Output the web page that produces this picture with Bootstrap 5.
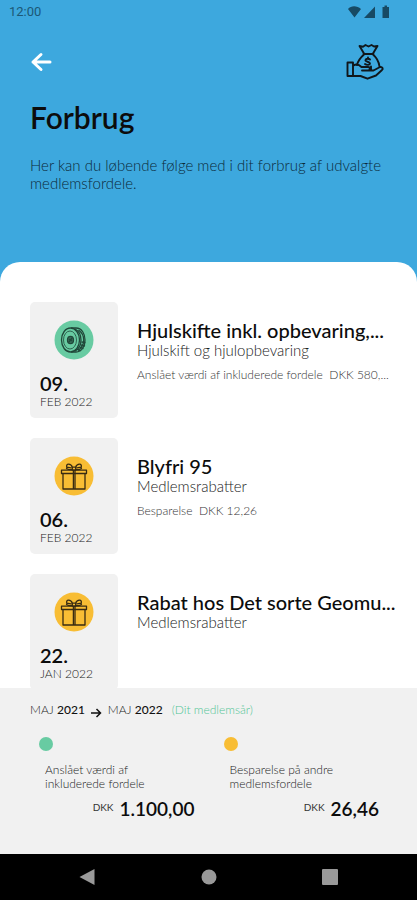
<!DOCTYPE html>
<html lang="da">
<head>
<meta charset="utf-8">
<meta name="viewport" content="width=device-width, initial-scale=1">
<title>Forbrug</title>
<link rel="stylesheet" href="https://cdn.jsdelivr.net/npm/bootstrap@5.3.0/dist/css/bootstrap.min.css">
<style>
body { font-family: Lato, "Open Sans", sans-serif; background: #3da8de; color: #0c0c0c; }
.status { height: 24px; padding: 0 27px 0 9px; font: 13px/24px Roboto, sans-serif; color: #1c5876; }
.status svg { fill: #174a64; }
.top { height: 238px; padding: 16px 32px 0 30px; }
.back { line-height: 0; }
.page-title { font-size: 30px; line-height: 36px; font-weight: 600; margin: 15px 0 21px; }
.intro { font-size: 15px; line-height: 18px; font-weight: 300; color: #0c2a3a; }
.sheet { border-radius: 20px 20px 0 0; padding: 40px 27px 0 30px; }
.entries { gap: 20px; }
.entry { gap: 19px; }
.date-tile { width: 88px; height: 116px; padding: 18px 10px 0; border-radius: 5px; background: #f1f1f1; }
.date-tile svg { display: block; margin: 0 auto 11px 14px; }
.day { font-size: 20px; line-height: 24px; font-weight: 600; }
.month { font-size: 12px; line-height: 14px; font-weight: 300; color: #222; }
.entry-text { padding-top: 17px; }
.entry-title { font-size: 20px; line-height: 22px; font-weight: 500; }
.entry-kind { font-size: 15px; line-height: 18px; font-weight: 300; color: #222; }
.entry-value { font-size: 12px; line-height: 16px; margin-top: 8px; font-weight: 300; color: #333; }
.summary { height: 166px; padding: 14px 30px 0; background: #f1f1f1; }
.period { font-size: 12px; line-height: 16px; font-weight: 300; color: #222; }
.period strong { font-weight: 500; color: #111; }
.period svg { margin: 6px 6px 0 5px; }
.member-year { margin-left: 9px; color: #52c596; }
.totals { margin-top: 19px; }
.dot { width: 14px; height: 14px; margin-left: 9px; }
.dot-green { background: #68cba2; }
.dot-yellow { background: #f8bd34; }
.total-label { font-size: 12px; line-height: 14px; margin: 12px 0 0 15px; font-weight: 300; color: #222; }
.total { margin-top: 6px; line-height: 24px; gap: 6px; }
.total-first { padding-right: 14px; }
.total-second { padding-left: 6px; }
.currency { font-size: 10px; line-height: 20px; color: #333; }
.amount { font-size: 19px; font-weight: 600; }
.sysbar { height: 46px; padding: 0 78px; background: #000; }
.sysbar svg { fill: #999; display: block; }
</style>
<script src="https://cdn.jsdelivr.net/npm/bootstrap@5.3.0/dist/js/bootstrap.bundle.min.js"></script>
</head>
<body>
<svg class="d-none" aria-hidden="true">
  <symbol id="gift" viewBox="0 0 40 40">
    <circle cx="20" cy="20" r="19.5" fill="#f8bd34"/>
    <g fill="none" stroke="#382b12" stroke-width="1.3" stroke-linejoin="round">
      <path d="M7.500 14.200h25v3.300h-25zM9 17.500v15.500h22V17.500M19.400 14.200V33M21 14.200V33"/>
      <path d="M18.500 13.500c-3 .2-6-.2-6-1.200 0-1 2-1.400 5-.3M18.500 11.500c-.7-2-2-3.300-4-3.300-1.500 0-2.500 1.200-1.500 3.300M21.500 13.500c3 .2 6-.2 6-1.200 0-1-2-1.400-5-.3M21.500 11.500c.7-2 2-3.300 4-3.300 1.500 0 2.500 1.200 1.500 3.300M18.300 11.200h3.400v3h-3.400z"/>
    </g>
  </symbol>
</svg>
<div class="d-flex flex-column vh-100 overflow-hidden">
  <div class="status d-flex justify-content-between align-items-center flex-shrink-0">
    <span>12:00</span>
    <svg width="43" height="14" viewBox="0 0 43 14" aria-hidden="true"><path d="M1 4C4 .2 10 .2 14 4L7.500 12.500zM17 13L28 1.500V13zM35.500 2h2V.5h2.500V2H42v11h-6.500z"/></svg>
  </div>
  <header class="top flex-shrink-0">
    <div class="d-flex justify-content-between align-items-center">
      <button type="button" class="back btn p-0 border-0" aria-label="Tilbage">
        <svg width="22" height="20" viewBox="0 0 22 20" fill="none" stroke="#fff" stroke-width="3" stroke-linecap="round" stroke-linejoin="round" aria-hidden="true"><path d="M20 10H3M11 2.500L3 10l8 7.500"/></svg>
      </button>
      <svg width="40" height="44" viewBox="0 0 40 44" fill="none" stroke="#10171b" stroke-width="1.900" stroke-linejoin="round" stroke-linecap="round" aria-hidden="true">
        <path d="M19 13.500L14.500 6l3.500.7L20.500 5l3 1.500L26.500 5l2.500 1.500 3.500-.5L28 13.500M18.500 14h10M19 14.500c-4 3.500-6 6.500-7 10.500M28 14.500c4 3.500 6 8 6.500 12"/>
        <path d="M2.500 22.500h5.500v13.500H2.500zM8.500 25.500c3-2 6-.5 8 1.500h6.500c2.500 0 2.500 3.500 0 3.500h-6M24.500 30.500h4l6.500-3.500c2.500-.5 3.500 2 2 3L31 35.500l-8.500 3.200-7-2.700H8.500M26 30.500v-4"/>
        <path d="M25 19.500c-1-1-4-1-4.500.5-.5 2 4.500 1.500 4.500 3.500 0 1.500-3 2-5 .500M23 17.500v1.200"/>
      </svg>
    </div>
    <h1 class="page-title">Forbrug</h1>
    <p class="intro mb-0">Her kan du løbende følge med i dit forbrug af udvalgte medlemsfordele.</p>
  </header>
  <main class="sheet bg-white flex-grow-1 overflow-hidden">
    <div class="entries d-flex flex-column">
      <article class="entry d-flex">
        <div class="date-tile flex-shrink-0">
          <svg width="40" height="40" viewBox="0 0 40 40" aria-hidden="true">
            <circle cx="20" cy="20" r="19.500" fill="#68cba2"/>
            <g fill="none" stroke="#20483a" stroke-width="1.300">
              <ellipse cx="16.500" cy="20" rx="9" ry="12"/><ellipse cx="16" cy="20" rx="6.500" ry="9" stroke-width=".8"/>
              <path d="M17 8h5c12 0 12 24 0 24h-5"/>
              <path d="M21 9c8 4 8 18 0 22M24.500 10c7 5 7 15 0 20" stroke-width="1.300"/>
              <path d="M27 25l4 1M26 27.500l3.500 1M24 30l3 .5M27.500 22l4 .5" stroke-width="1.500"/>
              <ellipse cx="16.500" cy="20" rx="3" ry="3.700" fill="#376e59"/><path d="M15 19l3 2M18 18l-3 4"/>
            </g>
          </svg>
          <div class="day">09.</div>
          <div class="month">FEB 2022</div>
        </div>
        <div class="entry-text flex-grow-1">
          <h2 class="entry-title text-nowrap mb-0">Hjulskifte inkl. opbevaring,...</h2>
          <div class="entry-kind">Hjulskift og hjulopbevaring</div>
          <div class="entry-value text-nowrap">Anslået værdi af inkluderede fordele&nbsp; DKK 580,...</div>
        </div>
      </article>
      <article class="entry d-flex">
        <div class="date-tile flex-shrink-0">
          <svg width="40" height="40" aria-hidden="true"><use href="#gift"/></svg>
          <div class="day">06.</div>
          <div class="month">FEB 2022</div>
        </div>
        <div class="entry-text flex-grow-1">
          <h2 class="entry-title text-nowrap mb-0">Blyfri 95</h2>
          <div class="entry-kind">Medlemsrabatter</div>
          <div class="entry-value text-nowrap">Besparelse&nbsp; DKK 12,26</div>
        </div>
      </article>
      <article class="entry d-flex">
        <div class="date-tile flex-shrink-0">
          <svg width="40" height="40" aria-hidden="true"><use href="#gift"/></svg>
          <div class="day">22.</div>
          <div class="month">JAN 2022</div>
        </div>
        <div class="entry-text flex-grow-1">
          <h2 class="entry-title text-nowrap mb-0">Rabat hos Det sorte Geomu...</h2>
          <div class="entry-kind">Medlemsrabatter</div>
        </div>
      </article>
    </div>
  </main>
  <section class="summary flex-shrink-0">
    <div class="period d-flex align-items-center">
      <span>MAJ <strong>2021</strong></span>
      <svg width="12" height="10" viewBox="0 0 12 10" fill="none" stroke="#111" stroke-width="1.500" aria-hidden="true"><path d="M1 5h9.500M6.500 1l4 4-4 4"/></svg>
      <span>MAJ <strong>2022</strong></span>
      <span class="member-year">(Dit medlemsår)</span>
    </div>
    <div class="totals row g-0">
      <div class="total-first col-6">
        <div class="dot dot-green rounded-circle"></div>
        <div class="total-label">Anslået værdi af<br>inkluderede fordele</div>
        <div class="total d-flex justify-content-end"><span class="currency">DKK</span><span class="amount">1.100,00</span></div>
      </div>
      <div class="total-second col-6">
        <div class="dot dot-yellow rounded-circle"></div>
        <div class="total-label">Besparelse på andre<br>medlemsfordele</div>
        <div class="total pe-2 d-flex justify-content-end"><span class="currency">DKK</span><span class="amount">26,46</span></div>
      </div>
    </div>
  </section>
  <nav class="sysbar d-flex justify-content-between align-items-center flex-shrink-0" aria-label="System">
    <button type="button" class="btn p-0 border-0" aria-label="Tilbage"><svg width="18" height="18" viewBox="0 0 18 18"><path d="M16.500 1v16L1.500 9z"/></svg></button>
    <button type="button" class="btn p-0 border-0" aria-label="Hjem"><svg width="16" height="16" viewBox="0 0 16 16"><circle cx="8" cy="8" r="7.500"/></svg></button>
    <button type="button" class="btn p-0 border-0" aria-label="Oversigt"><svg width="18" height="18" viewBox="0 0 18 18"><rect x="1" y="1" width="16" height="16" rx="1"/></svg></button>
  </nav>
</div>
</body>
</html>
